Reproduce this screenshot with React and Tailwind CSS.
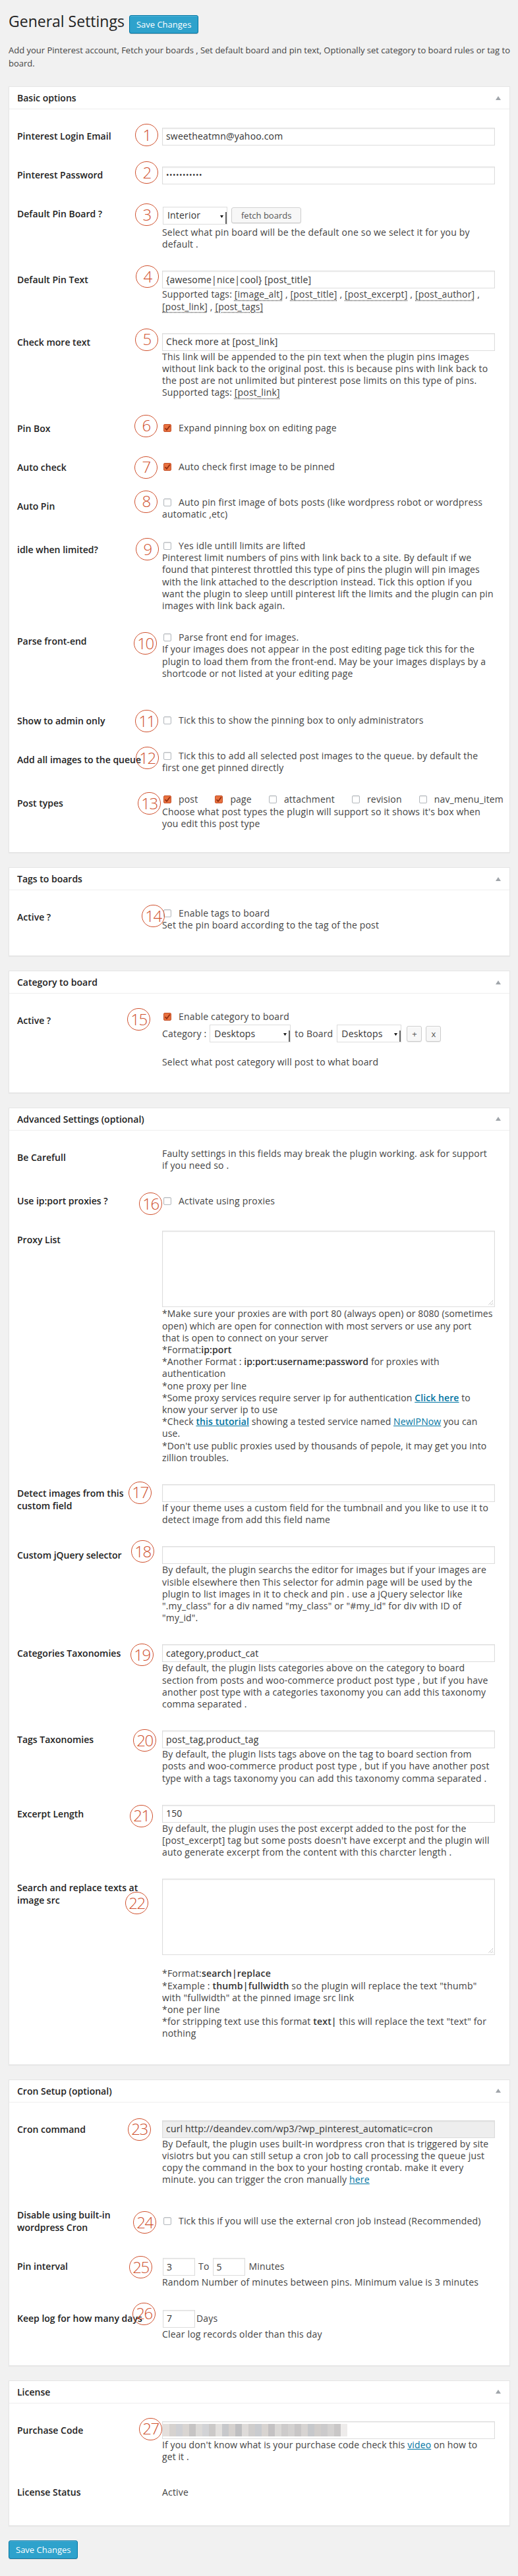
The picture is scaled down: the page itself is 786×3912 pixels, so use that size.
import React from "react";

function Checkbox({ checked }) {
  return checked ? (
    <svg width="12" height="12" viewBox="0 0 12 12" className="ml-[2px] mr-[11px] inline-block align-[-1px]">
      <rect x="0.5" y="0.5" width="11" height="11" rx="1.5" fill="#e8713f" stroke="#c4512a" />
      <path d="M2.6 6.2 L5 8.9 L9.8 2.6" fill="none" stroke="#8e2b10" strokeWidth="1.7" />
    </svg>
  ) : (
    <span className="ml-[2px] mr-[11px] inline-block h-[12px] w-[12px] rounded-[2px] border border-[#b4b9be] bg-white align-[-1px] shadow-[inset_0_1px_2px_rgba(0,0,0,0.1)]" />
  );
}

function Field({ children, className = "w-full", gray = false }) {
  return (
    <div
      className={`mt-px flex h-[27px] items-center overflow-hidden whitespace-nowrap border border-[#ddd] px-[5px] text-[14px] text-[#333] shadow-[inset_0_1px_2px_rgba(0,0,0,0.07)] ${
        gray ? "bg-[#eee]" : "bg-white"
      } ${className}`}
    >
      {children}
    </div>
  );
}

function Select({ value, className }) {
  return (
    <div className={`flex h-[27px] items-center border border-[#ddd] bg-white pl-[6px] text-[14px] text-[#333] ${className}`}>
      <span>{value}</span>
      <span className="ml-auto flex h-full items-center">
        <svg width="5" height="4" viewBox="0 0 5 4" className="mt-[3px]">
          <path d="M0 0 L5 0 L2.5 4 Z" fill="#111" />
        </svg>
        <span className="ml-[3px] h-[70%] w-[2px] self-end bg-[#666]" />
      </span>
    </div>
  );
}

function SmallButton({ children, className }) {
  return (
    <span
      className={`inline-flex items-center justify-center rounded-[3px] border border-[#ccc] bg-[#f7f7f7] text-[13px] tracking-normal text-[#555] shadow-[inset_0_1px_0_#fff,0_1px_0_rgba(0,0,0,0.08)] ${className}`}
    >
      {children}
    </span>
  );
}

function Textarea() {
  return (
    <div className="relative mt-px h-[116px] w-full border border-[#ddd] bg-white shadow-[inset_0_1px_2px_rgba(0,0,0,0.07)]">
      <svg width="9" height="9" viewBox="0 0 9 9" className="absolute bottom-[1px] right-[1px]">
        <path d="M8 1 L1 8 M8 4.5 L4.5 8 M8 7.5 L7.5 8" stroke="#999" strokeWidth="1" strokeDasharray="1 1" />
      </svg>
    </div>
  );
}

function Badge({ n, pos }) {
  return (
    <span
      className={`pointer-events-none absolute flex h-[34px] w-[35px] items-center justify-center rounded-full border-[1.5px] border-[#d0512e] pb-[1px] text-[24px] font-light leading-none tracking-[-1.5px] text-[#d0512e] ${pos}`}
    >
      {n}
    </span>
  );
}

function Row({ label, n, pos, children }) {
  return (
    <div className="relative flex items-center">
      <div className="w-[210px] shrink-0 self-start py-[20px] pr-[10px] text-[14px] font-semibold leading-[19px] text-[#222]">
        {label}
      </div>
      <div className="min-w-0 flex-1 px-[10px] py-[15px] text-[14px] leading-[18.2px] tracking-[0.18px] text-[#444]">
        {children}
      </div>
      {n ? <Badge n={n} pos={pos} /> : null}
    </div>
  );
}

function Box({ title, pb, children }) {
  return (
    <div className="mb-[22px] border border-[#e5e5e5] bg-white shadow-[0_1px_1px_rgba(0,0,0,0.04)]">
      <div className="flex h-[34px] items-center justify-between border-b border-[#eee] px-[12px]">
        <h3 className="text-[14px] font-semibold leading-[19px] text-[#222]">{title}</h3>
        <svg width="8" height="6" viewBox="0 0 8 6" className="mr-[1px]">
          <path d="M4 0 L8 6 L0 6 Z" fill="#a0a5aa" />
        </svg>
      </div>
      <div className={`px-[12px] pt-[11px] ${pb}`}>{children}</div>
    </div>
  );
}

function Tag({ children }) {
  return <span className="underline decoration-dotted underline-offset-[3px]">{children}</span>;
}

function A({ children, bold = false }) {
  return (
    <a className={`text-[#0074a2] underline ${bold ? "font-semibold" : ""}`} href="#">
      {children}
    </a>
  );
}

function B({ children }) {
  return <strong className="font-semibold text-[#333]">{children}</strong>;
}

function SaveButton() {
  return (
    <button className="h-[28px] shrink-0 rounded-[3px] border border-[#0074a2] bg-[#2ea2cc] px-[10px] text-[13px] leading-[26px] text-white shadow-[inset_0_1px_0_rgba(120,200,230,0.5),0_1px_0_rgba(0,0,0,0.15)]">
      Save Changes
    </button>
  );
}

const blurBlocks = [
  "bg-[#e4dfdc]", "bg-[#d6d2cf]", "bg-[#cfd0d4]", "bg-[#d9d5d2]", "bg-[#c6c4c4]", "bg-[#dcdad8]",
  "bg-[#d2d3d6]", "bg-[#cbc9c8]", "bg-[#e2e0de]", "bg-[#c7c8cb]", "bg-[#d5d1ce]", "bg-[#bfbfc1]",
  "bg-[#dedbd9]", "bg-[#cfcdcc]", "bg-[#c9cbcf]", "bg-[#d8d4d1]", "bg-[#c4c2c3]", "bg-[#dad8d6]",
  "bg-[#cdcbcb]", "bg-[#d3d1d0]", "bg-[#c8c6c6]", "bg-[#d7d4d2]", "bg-[#c6c8cb]", "bg-[#d0cdcb]",
  "bg-[#cbcacb]", "bg-[#d4d2d1]", "bg-[#c9c7c7]", "bg-[#eeeceb]",
];

export default function App() {
  return (
    <div className="min-h-screen bg-[#f1f1f1] pb-[16px] pl-[13px] pr-[12px] pt-[18px] font-['Open_Sans',sans-serif] text-[13px] text-[#444]">
      <div className="flex items-start gap-[7px]">
        <h2 className="text-[23px] font-normal leading-[29px] text-[#222]">General Settings</h2>
        <div className="mt-[5px]">
          <SaveButton />
        </div>
      </div>
      <p className="mt-[16px] leading-[19.5px]">
        Add your Pinterest account, Fetch your boards , Set default board and pin text, Optionally set category to board rules or tag to board.
      </p>

      <div className="mt-[25px]">
        <Box title="Basic options" pb="pb-[19px]">
          <Row label="Pinterest Login Email" n="1" pos="left-[179px] top-[11px]">
            <Field>sweetheatmn@yahoo.com</Field>
          </Row>
          <Row label="Pinterest Password" n="2" pos="left-[179px] top-[9px]">
            <Field>
              <span className="text-[12px] tracking-[0.5px]">•••••••••••</span>
            </Field>
          </Row>
          <Row label="Default Pin Board ?" n="3" pos="left-[179px] top-[14px]">
            <div className="flex h-[34px] items-center">
              <Select value="Interior" className="ml-px w-[98px]" />
              <SmallButton className="ml-[6px] h-[24px] px-[14px]">fetch boards</SmallButton>
            </div>
            <div>Select what pin board will be the default one so we select it for you by default .</div>
          </Row>
          <Row label="Default Pin Text" n="4" pos="left-[180px] top-[8px]">
            <Field>{"{awesome|nice|cool} [post_title]"}</Field>
            <div>
              Supported tags: <Tag>[image_alt]</Tag> , <Tag>[post_title]</Tag> , <Tag>[post_excerpt]</Tag> ,{" "}
              <Tag>[post_author]</Tag> , <Tag>[post_link]</Tag> , <Tag>[post_tags]</Tag>
            </div>
          </Row>
          <Row label="Check more text" n="5" pos="left-[179px] top-[9px]">
            <Field>Check more at [post_link]</Field>
            <div>
              This link will be appended to the pin text when the plugin pins images without link back to the original post. this is
              because pins with link back to the post are not unlimited but pinterest pose limits on this type of pins.
            </div>
            <div>
              Supported tags: <Tag>[post_link]</Tag>
            </div>
          </Row>
          <Row label="Pin Box" n="6" pos="left-[178px] top-[9px]">
            <div>
              <Checkbox checked />
              Expand pinning box on editing page
            </div>
          </Row>
          <Row label="Auto check" n="7" pos="left-[178px] top-[13px]">
            <div>
              <Checkbox checked />
              Auto check first image to be pinned
            </div>
          </Row>
          <Row label="Auto Pin" n="8" pos="left-[178px] top-[6px]">
            <div>
              <Checkbox />
              Auto pin first image of bots posts (like wordpress robot or wordpress automatic ,etc)
            </div>
          </Row>
          <Row label="idle when limited?" n="9" pos="left-[180px] top-[12px]">
            <div>
              <Checkbox />
              Yes idle untill limits are lifted
            </div>
            <div>
              Pinterest limit numbers of pins with link back to a site. By default if we found that pinterest throttled this type of
              pins the plugin will pin images with the link attached to the description instead. Tick this option if you want the
              plugin to sleep untill pinterest lift the limits and the plugin can pin images with link back again.
            </div>
          </Row>
          <Row label="Parse front-end" n="10" pos="left-[177px] top-[16px]">
            <div>
              <Checkbox />
              Parse front end for images.
            </div>
            <div>
              If your images does not appear in the post editing page tick this for the plugin to load them from the front-end. May
              be your images displays by a shortcode or not listed at your editing page
            </div>
            <div className="h-[18px]" />
          </Row>
          <Row label="Show to admin only" n="11" pos="left-[179px] top-[13px]">
            <div>
              <Checkbox />
              Tick this to show the pinning box to only administrators
            </div>
          </Row>
          <Row label="Add all images to the queue" n="12" pos="left-[180px] top-[10px]">
            <div>
              <Checkbox />
              Tick this to add all selected post images to the queue. by default the first one get pinned directly
            </div>
          </Row>
          <Row label="Post types" n="13" pos="left-[183px] top-[13px]">
            <div className="flex gap-[24px] whitespace-nowrap">
              <span>
                <Checkbox checked />
                post
              </span>
              <span>
                <Checkbox checked />
                page
              </span>
              <span>
                <Checkbox />
                attachment
              </span>
              <span>
                <Checkbox />
                revision
              </span>
              <span>
                <Checkbox />
                nav_menu_item
              </span>
            </div>
            <div>Choose what post types the plugin will support so it shows it's box when you edit this post type</div>
          </Row>
        </Box>

        <Box title="Tags to boards" pb="pb-[22px]">
          <Row label="Active ?" n="14" pos="left-[189px] top-[11px]">
            <div>
              <Checkbox />
              Enable tags to board
            </div>
            <div>Set the pin board according to the tag of the post</div>
          </Row>
        </Box>

        <Box title="Category to board" pb="pb-[22px]">
          <Row label="Active ?" n="15" pos="left-[167px] top-[11px]">
            <div>
              <Checkbox checked />
              Enable category to board
            </div>
            <div className="flex h-[32px] items-center whitespace-nowrap">
              <span>Category :</span>
              <Select value="Desktops" className="ml-[5px] w-[123px]" />
              <span className="ml-[6px]">to Board</span>
              <Select value="Desktops" className="ml-[6px] w-[98px]" />
              <SmallButton className="ml-[8px] h-[24px] w-[23px]">+</SmallButton>
              <SmallButton className="ml-[6px] h-[24px] w-[23px]">x</SmallButton>
            </div>
            <div className="h-[18px]" />
            <div>Select what post category will post to what board</div>
          </Row>
        </Box>

        <Box title="Advanced Settings (optional)" pb="pb-[22px]">
          <Row label="Be Carefull">
            <div>Faulty settings in this fields may break the plugin working. ask for support if you need so .</div>
          </Row>
          <Row label="Use ip:port proxies ?" n="16" pos="left-[185px] top-[17px]">
            <div>
              <Checkbox />
              Activate using proxies
            </div>
          </Row>
          <Row label="Proxy List">
            <Textarea />
            <div className="mt-px tracking-[0.1px]">
              *Make sure your proxies are with port 80 (always open) or 8080 (sometimes
              <br />
              open) which are open for connection with most servers or use any port
              <br />
              that is open to connect on your server
              <br />
              *Format:<B>ip:port</B>
              <br />
              *Another Format : <B>ip:port:username:password</B> for proxies with
              <br />
              authentication
              <br />
              *one proxy per line
              <br />
              *Some proxy services require server ip for authentication <A bold>Click here</A> to
              <br />
              know your server ip to use
              <br />
              *Check <A bold>this tutorial</A> showing a tested service named <A>NewIPNow</A> you can
              <br />
              use.
              <br />
              *Don't use public proxies used by thousands of pepole, it may get you into
              <br />
              zillion troubles.
            </div>
          </Row>
          <Row label="Detect images from this custom field" n="17" pos="left-[169px] top-[12px]">
            <Field />
            <div>If your theme uses a custom field for the tumbnail and you like to use it to detect image from add this field name</div>
          </Row>
          <Row label="Custom jQuery selector" n="18" pos="left-[173px] top-[7px]">
            <Field />
            <div>
              By default, the plugin searchs the editor for images but if your images are visible elsewhere then This selector for
              admin page will be used by the plugin to list images in it to check and pin . use a jQuery selector like ".my_class" for
              a div named "my_class" or "#my_id" for div with ID of "my_id".
            </div>
          </Row>
          <Row label="Categories Taxonomies" n="19" pos="left-[172px] top-[15px]">
            <Field>category,product_cat</Field>
            <div>
              By default, the plugin lists categories above on the category to board section from posts and woo-commerce product post
              type , but if you have another post type with a categories taxonomy you can add this taxonomy comma separated .
            </div>
          </Row>
          <Row label="Tags Taxonomies" n="20" pos="left-[176px] top-[14px]">
            <Field>post_tag,product_tag</Field>
            <div>
              By default, the plugin lists tags above on the tag to board section from posts and woo-commerce product post type , but
              if you have another post type with a tags taxonomy you can add this taxonomy comma separated .
            </div>
          </Row>
          <Row label="Excerpt Length" n="21" pos="left-[171px] top-[16px]">
            <Field>150</Field>
            <div>
              By default, the plugin uses the post excerpt added to the post for the [post_excerpt] tag but some posts doesn't have
              excerpt and the plugin will auto generate excerpt from the content with this charcter length .
            </div>
          </Row>
          <Row label="Search and replace texts at image src" n="22" pos="left-[164px] top-[36px]">
            <Textarea />
            <div className="h-[18px]" />
            <div className="mt-px">
              *Format:<B>search|replace</B>
              <br />
              *Example : <B>thumb|fullwidth</B> so the plugin will replace the text "thumb" with "fullwidth" at the pinned image src
              link
              <br />
              *one per line
              <br />
              *for stripping text use this format <B>text|</B> this will replace the text "text" for nothing
            </div>
          </Row>
        </Box>

        <Box title="Cron Setup (optional)" pb="pb-[23px]">
          <Row label="Cron command" n="23" pos="left-[168px] top-[13px]">
            <Field gray>curl http://deandev.com/wp3/?wp_pinterest_automatic=cron</Field>
            <div>
              By Default, the plugin uses built-in wordpress cron that is triggered by site visiotrs but you can still setup a cron job
              to call processing the queue just copy the command in the box to your hosting crontab. make it every minute. you can
              trigger the cron manually <A>here</A>
            </div>
          </Row>
          <Row label="Disable using built-in wordpress Cron" n="24" pos="left-[176px] top-[24px]">
            <div>
              <Checkbox />
              Tick this if you will use the external cron job instead (Recommended)
            </div>
          </Row>
          <Row label="Pin interval" n="25" pos="left-[170px] top-[14px]">
            <div className="flex h-[30px] items-center whitespace-nowrap">
              <Field className="ml-px w-[49px]">3</Field>
              <span className="ml-[5px]">To</span>
              <Field className="ml-[5px] w-[49px]">5</Field>
              <span className="ml-[6px]">Minutes</span>
            </div>
            <div>Random Number of minutes between pins. Minimum value is 3 minutes</div>
          </Row>
          <Row label="Keep log for how many days" n="26" pos="left-[175px] top-[6px]">
            <div className="flex h-[30px] items-center whitespace-nowrap">
              <Field className="ml-px w-[49px]">7</Field>
              <span className="ml-[2px]">Days</span>
            </div>
            <div>Clear log records older than this day</div>
          </Row>
        </Box>

        <Box title="License" pb="pb-[21px]">
          <Row label="Purchase Code" n="27" pos="left-[185px] top-[11px]">
            <div className="mt-px flex h-[27px] w-full items-center border border-[#ddd] bg-white shadow-[inset_0_1px_2px_rgba(0,0,0,0.07)]">
              <div className="flex h-[19px]">
                {blurBlocks.map((c, i) => (
                  <span key={i} className={`h-full w-[10px] ${c}`} />
                ))}
              </div>
            </div>
            <div className="tracking-[0.1px]">
              If you don't know what is your purchase code check this <A>video</A> on how to
              <br />
              get it .
            </div>
          </Row>
          <Row label="License Status">
            <div>Active</div>
          </Row>
        </Box>
      </div>

      <SaveButton />
    </div>
  );
}
